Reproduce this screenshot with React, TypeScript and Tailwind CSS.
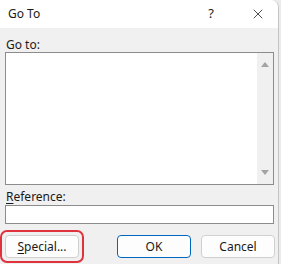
import { X } from "lucide-react";

const font = { fontFamily: '"Noto Sans", "Open Sans", sans-serif' };

function Button({ children, primary }: { children: React.ReactNode; primary?: boolean }) {
  return (
    <button
      className={
        primary
          ? "flex h-[23px] w-[74px] items-center justify-center rounded-[4px] border border-[#0067c0] bg-[#fdfdfd] text-[12px] text-[#1a1a1a]"
          : "flex h-[23px] w-[74px] items-center justify-center rounded-[4px] border border-[#d0d0d0] bg-[#fdfdfd] text-[12px] text-[#1a1a1a]"
      }
    >
      {children}
    </button>
  );
}

export default function App() {
  return (
    <div className="h-[264px] w-[281px] overflow-hidden bg-[#ebebeb]" style={font}>
      <div className="h-[264px] w-[279px] overflow-hidden rounded-tr-[8px] border-r border-[#c4c4c4] bg-[#f0f0f0]">
        <div className="flex h-[28px] items-center bg-white pl-[8px] text-[12px] text-[#1a1a1a]">
          <span className="flex-1">Go To</span>
          <span className="mr-[36px] text-[13px]">?</span>
          <X className="mr-[12px] size-[16px] text-[#222]" strokeWidth={1.2} />
        </div>

        <div className="px-[5px]">
          <div className="pl-[1px] pt-[9px] text-[12px] leading-[15px] text-[#1a1a1a]">Go to:</div>
          <div className="flex h-[133px] w-[269px] border border-[#8c8c8c] bg-white">
            <div className="flex-1" />
            <div className="flex w-[16px] flex-col items-center justify-between bg-[#f0f0f0] py-[9px]">
              <svg width="8" height="5" viewBox="0 0 8 5">
                <path d="M4 0 L8 5 L0 5 Z" fill="#a3a3a3" />
              </svg>
              <svg width="8" height="5" viewBox="0 0 8 5">
                <path d="M0 0 L8 0 L4 5 Z" fill="#a3a3a3" />
              </svg>
            </div>
          </div>

          <div className="mt-[4px] pl-[1px] text-[12px] leading-[15px] text-[#1a1a1a]">
            <span className="underline underline-offset-2">R</span>eference:
          </div>
          <div className="mt-[1px] h-[19px] w-[269px] border border-[#8c8c8c] bg-white" />
        </div>

        <div className="mt-[6px] flex items-center">
          <div className="rounded-[7px] border-2 border-[#e0323c] p-[3px]">
            <Button>
              <span className="underline underline-offset-2">S</span>pecial...
            </Button>
          </div>
          <div className="ml-[33px]">
            <Button primary>OK</Button>
          </div>
          <div className="ml-[10px]">
            <Button>Cancel</Button>
          </div>
        </div>
      </div>
    </div>
  );
}
